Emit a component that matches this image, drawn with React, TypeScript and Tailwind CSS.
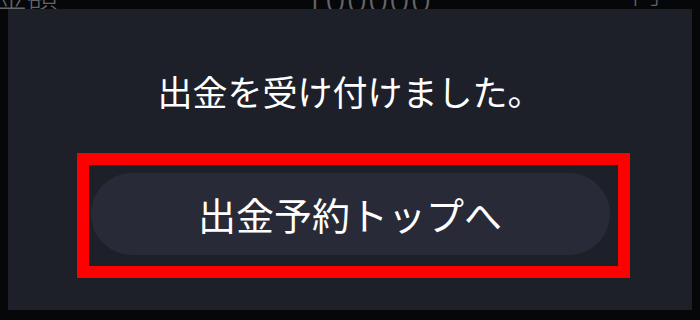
export default function App() {
  return (
    <div
      className="relative h-[320px] w-[700px] overflow-hidden bg-[#060709]"
      style={{ fontFamily: '"Noto Sans CJK JP", "Noto Sans", sans-serif' }}
    >
      {/* page behind the modal */}
      <div className="-mt-[22px] flex items-start leading-none text-[#63656b]">
        <span className="-ml-[4px] text-[31px] font-light">金額</span>
        <span className="ml-[246px] text-[38px] font-light tracking-[1px]">100000</span>
        <span className="ml-[200px] text-[28px] font-light">円</span>
      </div>

      {/* modal */}
      <div className="absolute left-[8px] right-[8px] top-[9px] bottom-[10px] bg-[#1e2029]">
        <div className="flex flex-col items-center pt-[64px]">
          <p className="text-[35px] leading-none font-normal text-white">出金を受け付けました。</p>
          <button className="mt-[65px] flex h-[82px] w-[519px] items-center justify-center rounded-full bg-[#282b37] text-[38px] leading-none text-white">
            出金予約トップへ
          </button>
        </div>

        {/* annotation */}
        <div className="absolute left-[69px] top-[144px] h-[125px] w-[553px] border-[12px] border-[#ff0000]" />
      </div>
    </div>
  );
}
